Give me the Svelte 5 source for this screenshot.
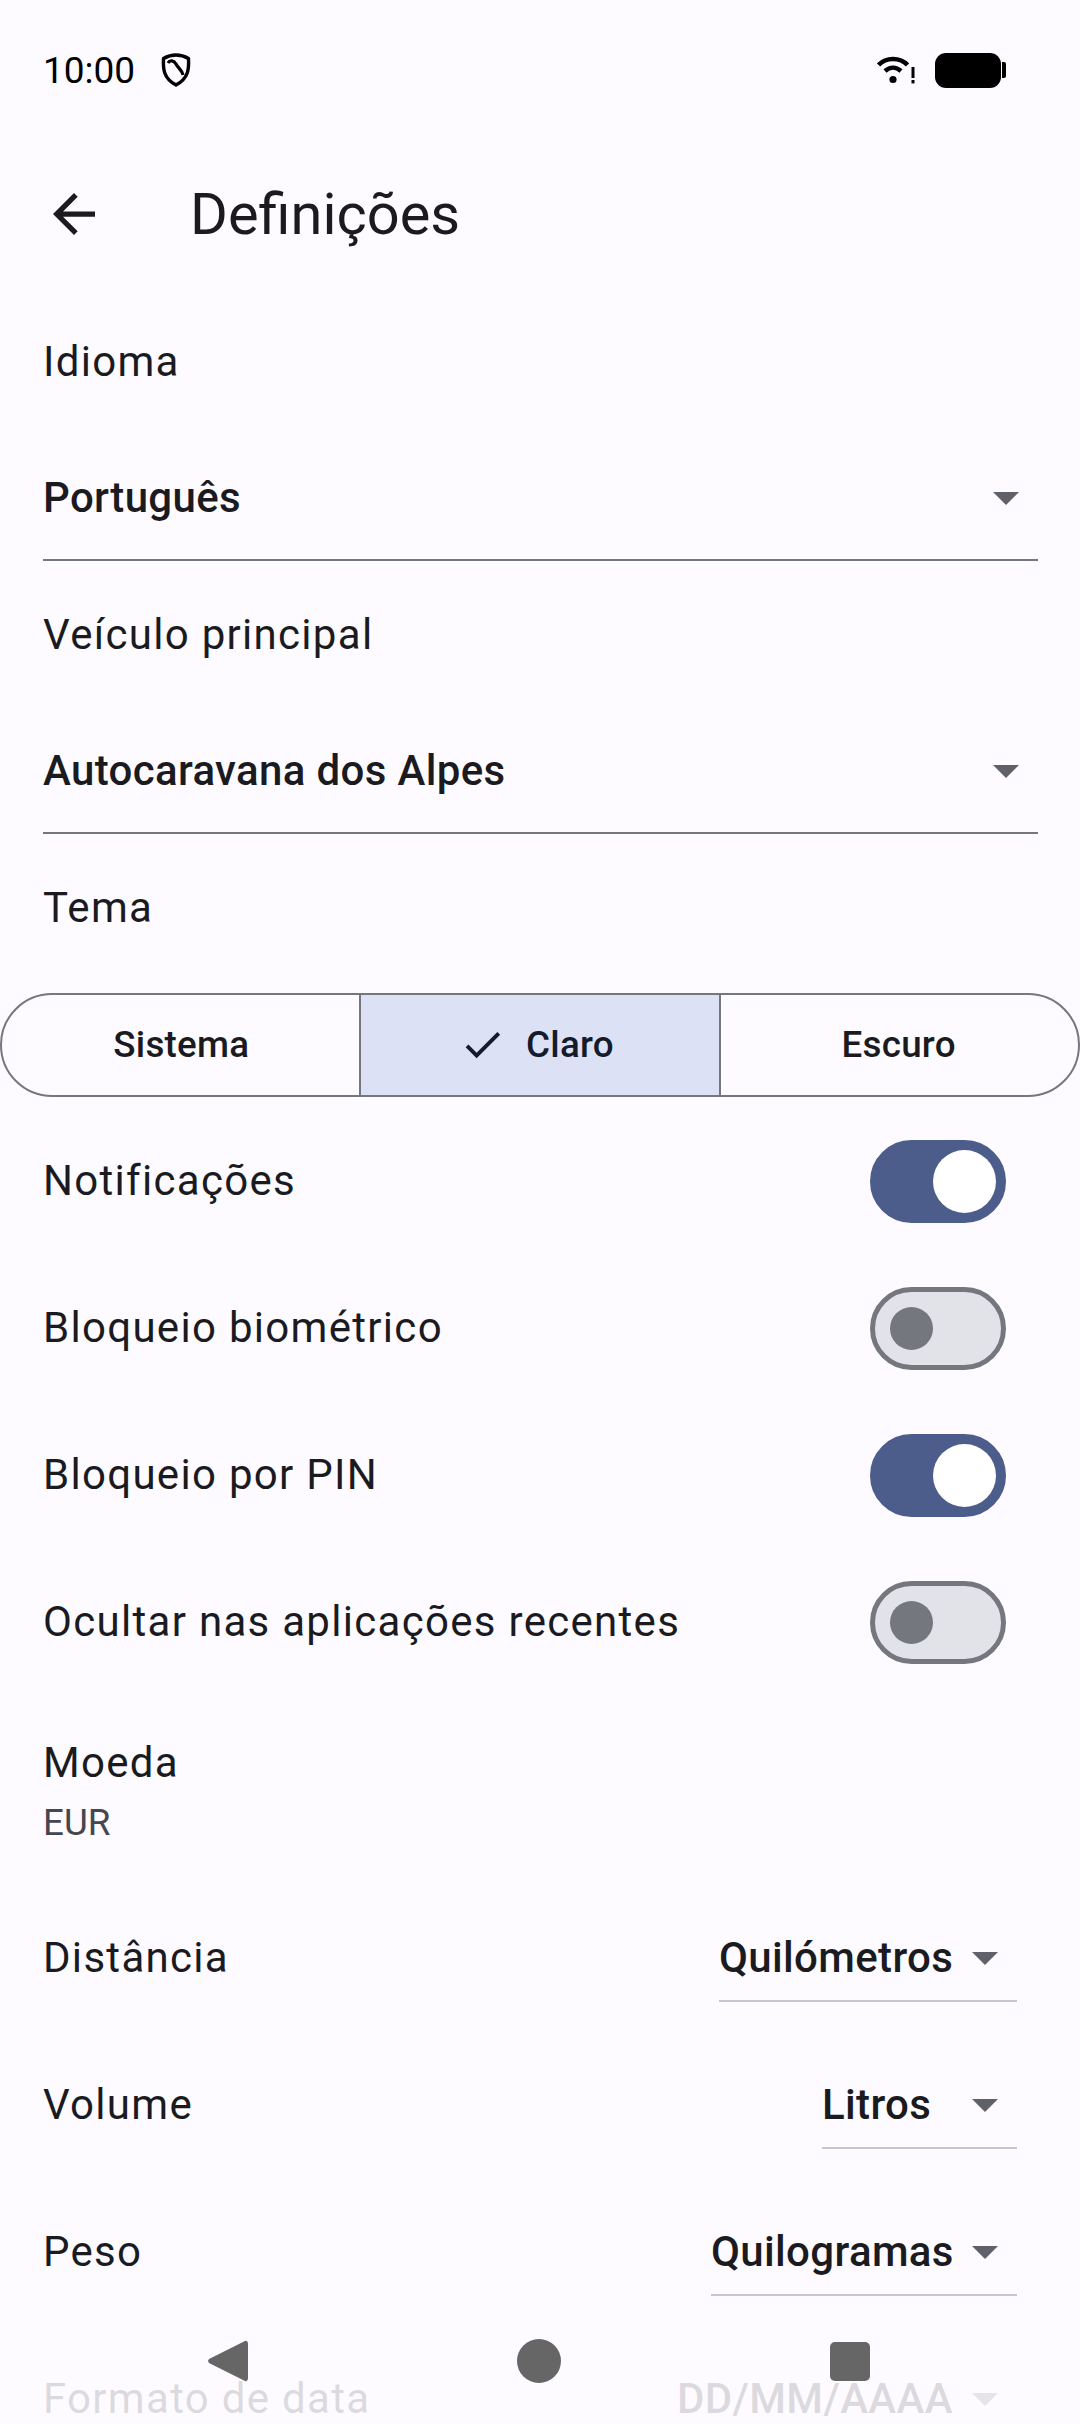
<script>
  let switches = [
    { label: 'Notificações', on: true },
    { label: 'Bloqueio biométrico', on: false },
    { label: 'Bloqueio por PIN', on: true },
    { label: 'Ocultar nas aplicações recentes', on: false }
  ];

  let units = [
    { label: 'Distância', value: 'Quilómetros', width: 298 },
    { label: 'Volume', value: 'Litros', width: 195 },
    { label: 'Peso', value: 'Quilogramas', width: 306 },
    { label: 'Formato de data', value: 'DD/MM/AAAA', width: 340 }
  ];
</script>

<div class="screen">
  <div class="status-bar">
    <div class="status-left">
      <span class="clock">10:00</span>
      <svg class="shield" viewBox="0 0 30 34" width="30" height="34">
        <path d="M15 2 C19 2 24 3.5 27.5 5.5 C28 15 28 25 15 32 C2 25 2 15 2.5 5.5 C6 3.5 11 2 15 2 Z" fill="none" stroke="#000" stroke-width="3.4" stroke-linejoin="round"/>
        <path d="M7 10 C9 6.5 13 7.5 15 11 C17 15 21 17 22 22" fill="none" stroke="#000" stroke-width="3.2"/>
      </svg>
    </div>
    <div class="status-right">
      <svg class="wifi" viewBox="0 0 38 30" width="38" height="30">
        <path d="M1.5 10 C9 2 23 2 30.5 10" fill="none" stroke="#000" stroke-width="4.6"/>
        <path d="M8 16 C13 11.5 19 11.5 24 16" fill="none" stroke="#000" stroke-width="4.4"/>
        <circle cx="16" cy="24.5" r="3.6" fill="#000"/>
        <rect x="34.5" y="12" width="3" height="11" fill="#000"/>
        <rect x="34.5" y="25" width="3" height="3.4" fill="#000"/>
      </svg>
      <div class="battery"></div>
      <div class="battery-tip"></div>
    </div>
  </div>

  <div class="app-bar">
    <svg class="back" viewBox="4 4 16 16" width="42" height="42">
      <path d="M20 11H7.83l5.59-5.59L12 4l-8 8 8 8 1.41-1.41L7.83 13H20v-2z" fill="#1b1b1f"/>
    </svg>
    <h1>Definições</h1>
  </div>

  <div class="label-row">Idioma</div>
  <div class="select-row">
    <span>Português</span>
    <i class="arrow"></i>
  </div>

  <div class="label-row">Veículo principal</div>
  <div class="select-row">
    <span>Autocaravana dos Alpes</span>
    <i class="arrow"></i>
  </div>

  <div class="label-row">Tema</div>
  <div class="segments">
    <div class="segment">Sistema</div>
    <div class="segment selected">
      <svg viewBox="0 0 24 24" width="47" height="47">
        <path d="M9 16.17 4.83 12l-1.42 1.41L9 19 21 7l-1.41-1.41z" fill="#141b2c"/>
      </svg>
      Claro
    </div>
    <div class="segment">Escuro</div>
  </div>

  <div class="switches">
    {#each switches as item}
      <div class="row">
        <span class="label">{item.label}</span>
        <div class="switch" class:on={item.on}><div class="thumb"></div></div>
      </div>
    {/each}
  </div>

  <div class="currency">
    <span class="label">Moeda</span>
    <span class="sub">EUR</span>
  </div>

  {#each units as unit}
    <div class="row">
      <span class="label">{unit.label}</span>
      <div class="unit-select" style="width: {unit.width}px">
        <span>{unit.value}</span>
        <i class="arrow"></i>
      </div>
    </div>
  {/each}

  <div class="nav-fade">
    <div class="nav-icons">
      <svg viewBox="0 0 40 44" width="40" height="44">
        <path d="M36 2.5 C38 1 40 2 40 5 V39 C40 42 38 43 36 41.5 L2 24.5 C-0.5 23 -0.5 21 2 19.5 Z" fill="#666"/>
      </svg>
      <div class="nav-circle"></div>
      <div class="nav-square"></div>
    </div>
  </div>
</div>

<style>
  :global(body) {
    margin: 0;
    background: #fdfbff;
  }

  .screen {
    position: relative;
    width: 1080px;
    height: 2424px;
    overflow: hidden;
    background: #fdfbff;
    color: #1b1b1f;
    font-family: Roboto, sans-serif;
  }

  .status-bar {
    height: 140px;
    padding: 0 74px 0 43px;
    display: flex;
    align-items: center;
    justify-content: space-between;
    box-sizing: border-box;
  }

  .status-left {
    display: flex;
    align-items: center;
    gap: 26px;
  }

  .clock {
    font-size: 37px;
    color: #000;
  }

  .status-right {
    display: flex;
    align-items: center;
  }

  .wifi {
    margin-right: 20px;
  }

  .battery {
    width: 66px;
    height: 35px;
    background: #000;
    border-radius: 11px;
  }

  .battery-tip {
    width: 4px;
    height: 16px;
    background: #000;
    border-radius: 0 2px 2px 0;
    margin-left: 1px;
  }

  .app-bar {
    height: 148px;
    display: flex;
    align-items: center;
    padding-left: 53px;
  }

  h1 {
    margin: 0 0 0 95px;
    font-size: 57.75px;
    font-weight: 400;
  }

  .label-row,
  .label {
    font-size: 42px;
    letter-spacing: 1.3px;
  }

  .label-row {
    height: 148px;
    padding-left: 43px;
    padding-bottom: 1px;
    box-sizing: border-box;
    display: flex;
    align-items: center;
  }

  .select-row {
    height: 125px;
    margin: 0 42px 0 43px;
    display: flex;
    align-items: center;
    justify-content: space-between;
    box-sizing: border-box;
    border-bottom: 2px solid #75777f;
    font-size: 42px;
    font-weight: 500;
    letter-spacing: 0.35px;
    padding-right: 19px;
  }

  .arrow {
    width: 0;
    height: 0;
    margin-top: 2px;
    border-left: 13px solid transparent;
    border-right: 13px solid transparent;
    border-top: 13px solid #5f6068;
  }

  .segments {
    display: grid;
    grid-template-columns: 1fr 1fr 1fr;
    height: 104px;
    margin-top: 11px;
    box-sizing: border-box;
    border: 2px solid #75777f;
    border-radius: 52px;
    overflow: hidden;
  }

  .segment {
    min-width: 0;
    box-sizing: border-box;
    display: flex;
    align-items: center;
    justify-content: center;
    gap: 20px;
    font-size: 36.75px;
    font-weight: 500;
    letter-spacing: 0.26px;
    padding-bottom: 1px;
  }

  .segment.selected {
    margin: 0 -2px;
    background: #dce1f6;
    color: #141b2c;
    padding-right: 7px;
    border-left: 2px solid #75777f;
    border-right: 2px solid #75777f;
  }

  .switches {
    margin-top: 11px;
  }

  .row {
    height: 147px;
    padding: 0 63px 0 43px;
    display: flex;
    align-items: center;
    justify-content: space-between;
  }

  .row .label {
    padding-bottom: 2px;
  }

  .switch {
    position: relative;
    width: 136px;
    height: 83px;
    margin-right: 11px;
    box-sizing: border-box;
    border-radius: 42px;
    border: 5px solid #75777f;
    background: #e2e2e9;
  }

  .switch.on {
    border-color: #4c5d8b;
    background: #4c5d8b;
  }

  .thumb {
    position: absolute;
    left: 15px;
    top: 15px;
    width: 43px;
    height: 43px;
    border-radius: 50%;
    background: #75777f;
  }

  .switch.on .thumb {
    left: 58px;
    top: 5px;
    width: 63px;
    height: 63px;
    background: #fff;
  }

  .currency {
    height: 189px;
    padding-left: 43px;
    display: flex;
    flex-direction: column;
    justify-content: center;
    gap: 14px;
  }

  .sub {
    font-size: 36.75px;
    color: #45464f;
  }

  .unit-select {
    height: 86px;
    display: flex;
    align-items: center;
    justify-content: space-between;
    box-sizing: border-box;
    border-bottom: 2px solid #c5c6d0;
    font-size: 42px;
    font-weight: 500;
    letter-spacing: 0.35px;
    padding-right: 19px;
  }

  .nav-fade {
    position: absolute;
    left: 0;
    right: 0;
    bottom: 0;
    height: 128px;
    background: linear-gradient(to bottom, rgba(253, 251, 255, 0.5), rgba(253, 251, 255, 0.85) 60%);
  }

  .nav-icons {
    position: absolute;
    top: 43px;
    left: 208px;
    width: 662px;
    display: flex;
    align-items: center;
    justify-content: space-between;
  }

  .nav-circle {
    width: 44px;
    height: 44px;
    border-radius: 50%;
    background: #666;
  }

  .nav-square {
    width: 40px;
    height: 39px;
    border-radius: 5px;
    background: #666;
  }
</style>
